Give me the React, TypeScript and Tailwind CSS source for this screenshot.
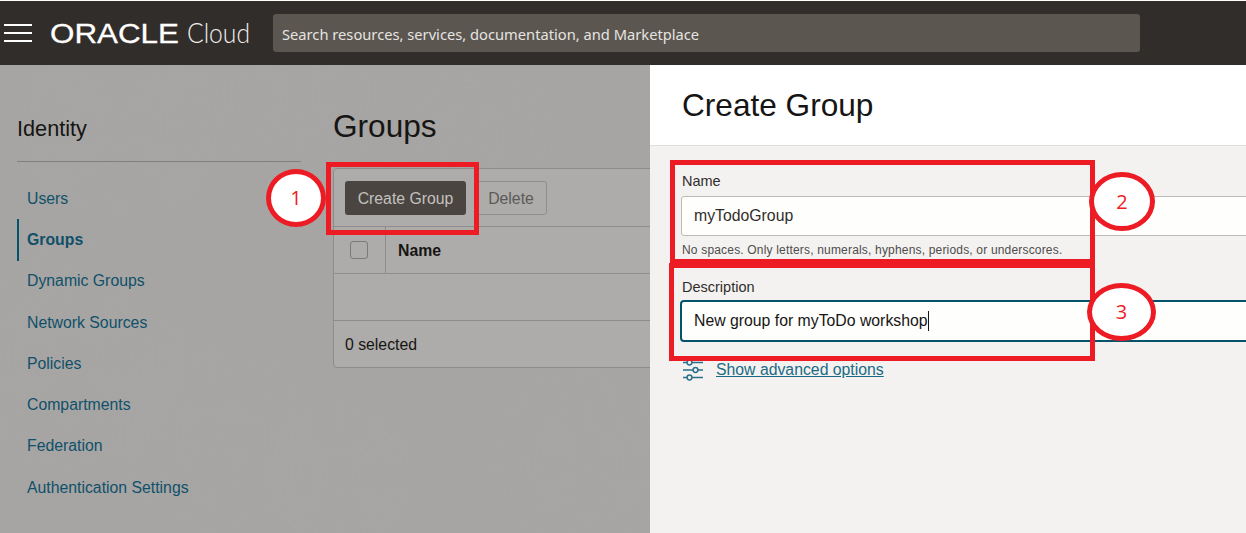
const navItems = [
  "Users",
  "Groups",
  "Dynamic Groups",
  "Network Sources",
  "Policies",
  "Compartments",
  "Federation",
  "Authentication Settings",
];

const swirls = [
  { cx: 120, cy: 60, n: 14 },
  { cx: 300, cy: 30, n: 12 },
  { cx: 70, cy: 290, n: 16 },
  { cx: 210, cy: 370, n: 14 },
  { cx: 470, cy: 70, n: 12 },
  { cx: 590, cy: 400, n: 14 },
  { cx: 340, cy: 410, n: 10 },
];

function Swirls() {
  return (
    <svg className="absolute inset-0 h-full w-full" aria-hidden="true">
      {swirls.map((s) =>
        Array.from({ length: s.n }).map((_, i) => (
          <circle
            key={`${s.cx}-${i}`}
            cx={s.cx}
            cy={s.cy}
            r={6 + i * 7}
            fill="none"
            stroke="#b4b3b1"
            strokeOpacity="0.14"
            strokeWidth="1.5"
          />
        ))
      )}
    </svg>
  );
}

function Logo() {
  return (
    <svg width="216" height="30" viewBox="0 0 216 30" className="ml-[18px] shrink-0 overflow-visible">
      <text
        x="0"
        y="25"
        fill="#fff"
        stroke="#fff"
        strokeWidth="0.3"
        fontFamily="'Liberation Sans', sans-serif"
        fontSize="27"
        textLength="129"
        lengthAdjust="spacingAndGlyphs"
      >
        ORACLE
      </text>
      <text
        x="137"
        y="25"
        fill="#f1efed"
        fontFamily="Lato, sans-serif"
        fontSize="27"
        fontWeight="300"
        textLength="63"
        lengthAdjust="spacingAndGlyphs"
      >
        Cloud
      </text>
    </svg>
  );
}

function AdvancedIcon() {
  return (
    <svg width="22" height="22" viewBox="0 0 22 22" fill="none" stroke="#2c6f8a" strokeWidth="1.5" className="shrink-0">
      <path d="M1 3.5h4M10 3.5h11M1 11h10M16 11h5M1 18.5h4M10 18.5h11" />
      <circle cx="7.5" cy="3.5" r="2.4" />
      <circle cx="13.5" cy="11" r="2.4" />
      <circle cx="7.5" cy="18.5" r="2.4" />
    </svg>
  );
}

function Marker({ label, className }: { label: string; className: string }) {
  return (
    <div
      className={`absolute flex items-center justify-center rounded-[50%] border-[5px] border-[#ed1c24] bg-white font-['Open_Sans',sans-serif] text-[20px] text-[#ed1c24] ${className}`}
    >
      {label}
    </div>
  );
}

export default function App() {
  return (
    <div className="relative h-[533px] w-[1246px] overflow-hidden bg-white font-['Liberation_Sans',Arial,sans-serif]">
      <header className="mt-px flex h-[64px] items-center bg-[#312d2a]">
        <div className="ml-1 flex w-[28px] shrink-0 flex-col gap-[6px]">
          <span className="h-[2px] bg-white" />
          <span className="h-[2px] bg-white" />
          <span className="h-[2px] bg-white" />
        </div>
        <Logo />
        <div className="ml-[7px] flex h-[38px] w-[867px] items-center rounded-[3px] bg-[#5b5650] pl-[9px] pt-[2px] font-['Noto_Sans',sans-serif] text-[14.7px] text-[#e6e4e1]">
          Search resources, services, documentation, and Marketplace
        </div>
      </header>

      <div className="flex h-[468px]">
        <div className="relative flex w-[650px] shrink-0 overflow-hidden bg-[#a6a5a3]">
          <Swirls />
          <aside className="relative ml-[17px] w-[284px] shrink-0">
            <h2 className="mt-[49px] text-[21.7px] leading-[30px] text-[#161513]">Identity</h2>
            <div className="mt-[17px] h-px bg-[#82807d]" />
            <nav className="mt-[16px] flex flex-col">
              {navItems.map((item) => {
                const active = item === "Groups";
                return (
                  <div
                    key={item}
                    className={`flex h-[41.25px] items-center border-l-2 pl-2 text-[15.8px] text-[#10506a] ${
                      active ? "border-[#04536a] font-bold" : "border-transparent"
                    }`}
                  >
                    {item}
                  </div>
                );
              })}
            </nav>
          </aside>

          <main className="relative ml-[32px] flex-1">
            <h1 className="mt-[41px] text-[31.6px] leading-[40px] text-[#161513]">Groups</h1>
            <div className="mt-[22px] h-[200px] w-[340px] rounded-[4px] border border-[#8f8d8a] bg-[#adacaa]">
              <div className="flex h-[58px] items-center gap-[9px] border-b border-[#8f8d8a] pl-[11px]">
                <div className="flex h-[34px] w-[121px] items-center justify-center rounded-[3px] bg-[#4a4541] pt-[2px] text-[15.8px] text-[#c2c1bf]">
                  Create Group
                </div>
                <div className="flex h-[34px] w-[72px] items-center justify-center rounded-[3px] border border-[#918f8c] pt-[2px] text-[15.8px] text-[#5c5a58]">
                  Delete
                </div>
              </div>
              <div className="flex h-[47px] border-b border-[#8f8d8a]">
                <div className="flex w-[52px] items-center justify-center border-r border-[#8f8d8a] pr-px">
                  <span className="h-[18px] w-[18px] rounded-[3px] border border-[#7c7a77]" />
                </div>
                <div className="flex items-center pl-3 pt-px text-[15.8px] font-bold text-[#161513]">Name</div>
              </div>
              <div className="h-[47px] border-b border-[#8f8d8a]" />
              <div className="flex h-[46px] items-center pl-[11px] pt-px text-[15.8px] text-[#161513]">0 selected</div>
            </div>
          </main>
        </div>

        <section className="flex-1 overflow-hidden bg-[#f3f2f1]">
          <div className="flex h-[81px] items-center border-b border-[#dfdedc] bg-white pl-8 pt-[2px] text-[31.6px] text-[#161513]">
            Create Group
          </div>
          <div className="pl-8">
            <div className="mt-[26px] text-[14.5px] leading-[18px] text-[#312d2a]">Name</div>
            <div className="mt-[6px] -ml-px -mr-4 flex h-[40px] items-center rounded-[3px] border border-[#bdbbb8] bg-[#fefefd] pl-3 text-[15.8px] text-[#312d2a]">
              myTodoGroup
            </div>
            <div className="mt-[7px] text-[12px] leading-[14px] tracking-[0.18px] text-[#4f4c4a]">
              No spaces. Only letters, numerals, hyphens, periods, or underscores.
            </div>
            <div className="mt-[21px] text-[14.5px] leading-[18px] text-[#312d2a]">Description</div>
            <div className="mt-[4px] -ml-[2px] -mr-4 flex h-[42px] items-center rounded-[4px] border-2 border-[#04536a] bg-[#fefefd] pl-3 text-[15.8px] text-[#161513]">
              New group for myToDo workshop
              <span className="h-[20px] w-px bg-[#161513]" />
            </div>
            <div className="mt-[16px] flex items-center gap-[12px]">
              <AdvancedIcon />
              <span className="text-[15.8px] text-[#1b6a85] underline">Show advanced options</span>
            </div>
          </div>
        </section>
      </div>

      <div className="absolute left-[326px] top-[162px] h-[73px] w-[153px] border-[5px] border-[#ed1c24]" />
      <div className="absolute left-[670px] top-[160px] h-[104px] w-[425px] border-[5px] border-[#ed1c24]" />
      <div className="absolute left-[669px] top-[263px] h-[98px] w-[426px] border-[5px] border-[#ed1c24]" />
      <Marker label="1" className="left-[266px] top-[169px] h-[58px] w-[60px]" />
      <Marker label="2" className="left-[1089px] top-[172px] h-[59px] w-[66px]" />
      <Marker label="3" className="left-[1087px] top-[283px] h-[58px] w-[69px]" />
    </div>
  );
}
